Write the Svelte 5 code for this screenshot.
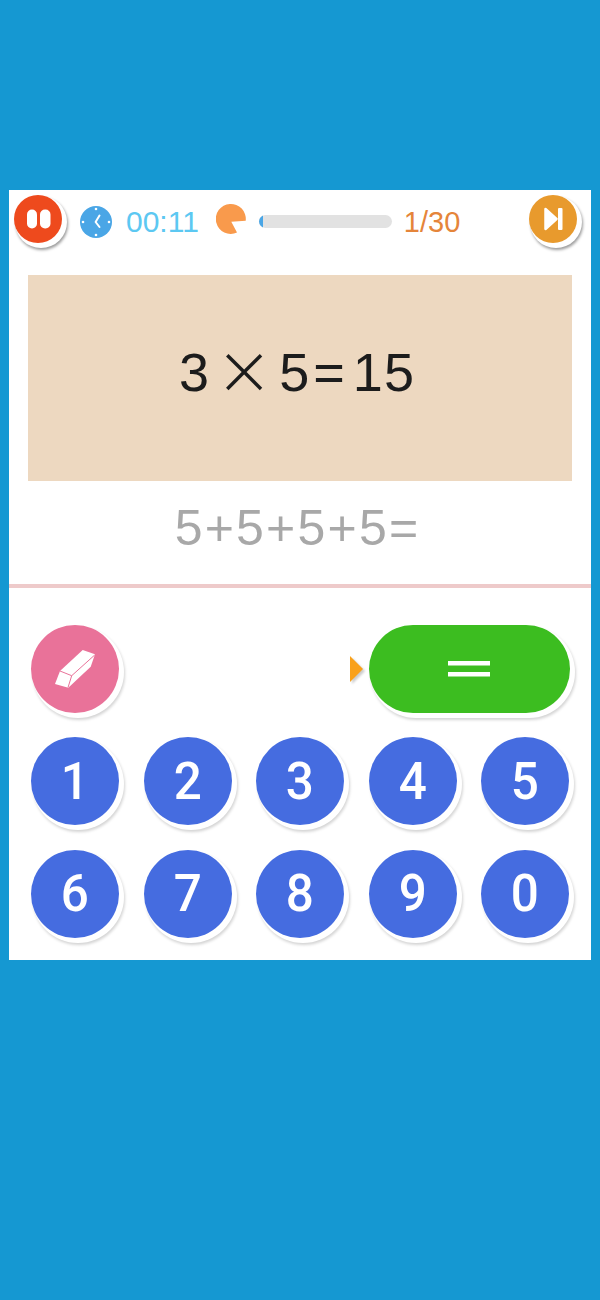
<script>
  const digits = [1, 2, 3, 4, 5, 6, 7, 8, 9, 0];
</script>

<div class="page">
  <main class="panel">
    <header class="top">
      <button class="round small pause" aria-label="Pause">
        <svg viewBox="0 0 48 48" width="48" height="48">
          <rect x="13" y="14.5" width="10" height="19" rx="5" fill="#fff" />
          <rect x="26" y="14.5" width="10.5" height="19" rx="5" fill="#fff" />
        </svg>
      </button>
      <svg class="clock" viewBox="0 0 32 32" width="32" height="32">
        <circle cx="16" cy="16" r="16" fill="#4aa6e6" />
        <circle cx="16" cy="3" r="1.3" fill="#fff" />
        <circle cx="29" cy="16" r="1.3" fill="#fff" />
        <circle cx="16" cy="29" r="1.3" fill="#fff" />
        <circle cx="3" cy="16" r="1.3" fill="#fff" />
        <path d="M19.5 9.5 L15.6 16 L19.5 21" fill="none" stroke="#fff" stroke-width="2" stroke-linecap="round" stroke-linejoin="round" />
      </svg>
      <span class="time">00:11</span>
      <svg class="pac" viewBox="0 0 32 32" width="32" height="32">
        <path d="M29.7 17.7 L15.3 18.7 L21 29.6 A15 15 0 1 1 29.7 17.7 Z" fill="#f99a4c" />
      </svg>
      <div class="bar"><div class="fill"></div></div>
      <span class="count">1/30</span>
      <button class="round small skip" aria-label="Skip">
        <svg viewBox="0 0 48 48" width="48" height="48">
          <path d="M16.5 14 L27.5 24 L16.5 34 Z" fill="#fff" stroke="#fff" stroke-width="2.5" stroke-linejoin="round" />
          <rect x="29" y="13" width="4.5" height="22" rx="1" fill="#fff" />
        </svg>
      </button>
    </header>

    <section class="question">
      <span>3</span><span class="times">×</span><span>5</span><span class="eq">=</span><span class="one">1</span><span>5</span>
    </section>

    <p class="hint">5+5+5+5=</p>

    <hr class="line" />

    <div class="keys">
      <div class="actions">
        <button class="round key erase" aria-label="Erase">
          <svg viewBox="0 0 88 88" width="88" height="88">
            <path d="M51.7 25 L64 29.3 L59.7 41.7 L37.3 62.7 L24 59 L29 46 Z" fill="#fff" />
            <path d="M29 46 L40.7 50.7 L63.7 30 M40.7 50.7 L37 62.5" fill="none" stroke="#e97299" stroke-width="1" />
          </svg>
        </button>
        <div class="submit">
          <span class="arrow"></span>
          <button class="pill" aria-label="Equals">
            <svg viewBox="0 0 42 16" width="42" height="16">
              <rect x="0" y="0" width="42" height="4.5" fill="#fff" />
              <rect x="0" y="11" width="42" height="4.5" fill="#fff" />
            </svg>
          </button>
        </div>
      </div>
      <div class="digits">
        {#each digits as d}
          <button class="round key digit"><span>{d}</span></button>
        {/each}
      </div>
    </div>
  </main>
</div>

<style>
  :global(body) {
    background: #1598d2;
  }

  .page {
    height: 1300px;
    padding: 190px 9px 0;
    box-sizing: border-box;
    font-family: "Liberation Sans", Arial, sans-serif;
  }

  .panel {
    height: 770px;
    background: #fff;
    overflow: hidden;
  }

  button {
    border: none;
    padding: 0;
    margin: 0;
    cursor: pointer;
    font-family: inherit;
  }

  button svg {
    display: block;
  }

  .round {
    border-radius: 50%;
    display: flex;
    align-items: center;
    justify-content: center;
    box-shadow: 3px 3px 0 2px #fff, 4px 5px 3px 2px #d4d4d4;
  }

  .top {
    height: 85px;
    padding: 5px 14px 0 5px;
    box-sizing: border-box;
    display: flex;
    align-items: flex-start;
  }

  .small {
    width: 48px;
    height: 48px;
    flex: none;
    box-shadow: 3px 3px 0 2px #fff, 4px 5px 3px 2px #9a9a9a;
  }

  .pause {
    background: #ee4a1d;
  }

  .skip {
    background: #e89a2d;
    margin-left: auto;
  }

  .clock {
    margin: 11px 0 0 18px;
    flex: none;
  }

  .time {
    margin: 10px 0 0 14px;
    font-size: 30px;
    line-height: 34px;
    color: #5cc8f2;
  }

  .pac {
    margin: 8px 0 0 17px;
    flex: none;
  }

  .bar {
    width: 133px;
    height: 13px;
    margin: 20px 0 0 11px;
    border-radius: 7px;
    background: #e2e2e2;
    overflow: hidden;
    flex: none;
  }

  .fill {
    width: 4px;
    height: 100%;
    background: #4aa6e6;
  }

  .count {
    margin: 10px 0 0 12px;
    font-size: 29px;
    line-height: 34px;
    color: #e5853a;
  }

  .question {
    margin: 0 19px;
    height: 206px;
    padding: 0 7px 12px 0;
    box-sizing: border-box;
    background: #edd8c0;
    display: flex;
    align-items: center;
    justify-content: center;
    font-size: 54px;
    color: #1c1c1c;
  }

  .times {
    font-family: Inter, sans-serif;
    font-weight: 250;
    font-size: 84px;
    line-height: 54px;
    margin: 0 8px 12px;
  }

  .eq {
    margin: 0 8px 0 4px;
  }

  .one {
    margin-right: 1px;
  }

  .hint {
    margin: 0;
    height: 103px;
    padding-right: 5px;
    line-height: 94px;
    text-align: center;
    font-size: 50px;
    letter-spacing: 2.2px;
    color: #a8a8a8;
  }

  .line {
    margin: 0;
    height: 4px;
    border: none;
    background: #eecaca;
  }

  .keys {
    padding: 37px 22px 0;
  }

  .actions {
    display: flex;
    justify-content: space-between;
    margin: 0 -1px 24px 0;
  }

  .key {
    width: 88px;
    height: 88px;
  }

  .erase {
    background: #e97299;
  }

  .submit {
    display: flex;
    align-items: center;
  }

  .arrow {
    width: 0;
    height: 0;
    border-style: solid;
    border-width: 13px 0 13px 13px;
    border-color: transparent transparent transparent #f9a11b;
    margin-right: 6px;
    filter: drop-shadow(2px 2px 1px #ccc);
  }

  .pill {
    width: 201px;
    height: 88px;
    padding-right: 2px;
    border-radius: 44px;
    background: #3cbd20;
    display: flex;
    align-items: center;
    justify-content: center;
    box-shadow: 3px 3px 0 2px #fff, 4px 5px 3px 2px #d4d4d4;
  }

  .digits {
    display: grid;
    grid-template-columns: repeat(5, 88px);
    justify-content: space-between;
    row-gap: 24.5px;
  }

  .digit {
    background: #456ce0;
    color: #fff;
    font-family: Roboto, sans-serif;
    font-size: 52px;
    font-weight: 500;
  }

  .digit span {
    display: block;
    transform: scaleX(0.95);
  }
</style>
